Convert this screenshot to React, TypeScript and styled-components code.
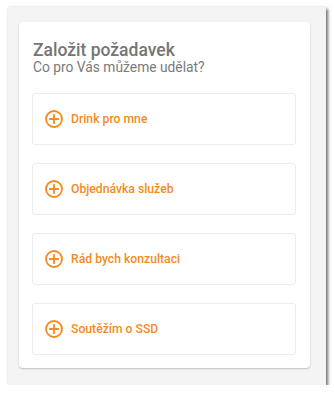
import React from "react";
import styled, { createGlobalStyle } from "styled-components";

const Global = createGlobalStyle`
  html, body { margin: 0; padding: 0; background: #ffffff; }
  body { font-family: Roboto, "Noto Sans", Arial, sans-serif; }
`;

const Frame = styled.div`
  margin: 7px 0 0 8px;
  width: 318px;
  height: 378px;
  box-sizing: border-box;
  background: #f4f4f4;
  padding: 15px 16px 0 11px;
  box-shadow: 2px 2px 3px rgba(0, 0, 0, 0.55), 0 0 2px rgba(0, 0, 0, 0.12);
`;

const Card = styled.div`
  background: #ffffff;
  border-radius: 4px;
  box-shadow: 0 1px 2px rgba(0, 0, 0, 0.22);
  padding: 18px 14px 13px 13px;
  display: flex;
  flex-direction: column;
`;

const Title = styled.h1`
  margin: 0 0 0 1px;
  font-size: 17.5px;
  line-height: 20px;
  font-weight: 500;
  color: #757575;
`;

const Subtitle = styled.p`
  margin: 1px 0 20px 1px;
  font-size: 13.8px;
  line-height: 12px;
  font-weight: 400;
  color: #7a7a7a;
`;

const List = styled.div`
  display: flex;
  flex-direction: column;
  gap: 18px;
`;

const Item = styled.button`
  display: flex;
  align-items: center;
  gap: 8px;
  height: 52px;
  padding: 0 0 0 12px;
  box-sizing: border-box;
  background: #ffffff;
  border: 1px solid #ececec;
  border-radius: 3px;
  font-family: inherit;
  font-size: 12.2px;
  font-weight: 500;
  color: #f58a1f;
  cursor: pointer;
  text-align: left;
`;

const PlusIcon = () => (
  <svg width="18" height="18" viewBox="0 0 18 18" fill="none" stroke="#f58a1f" strokeWidth="1.8" strokeLinecap="round">
    <circle cx="9" cy="9" r="8" />
    <line x1="9" y1="4.8" x2="9" y2="13.2" />
    <line x1="4.8" y1="9" x2="13.2" y2="9" />
  </svg>
);

const items = ["Drink pro mne", "Objednávka služeb", "Rád bych konzultaci", "Soutěžím o SSD"];

export default function App() {
  return (
    <>
      <Global />
      <Frame>
        <Card>
          <Title>Založit požadavek</Title>
          <Subtitle>Co pro Vás můžeme udělat?</Subtitle>
          <List>
            {items.map((t) => (
              <Item key={t}>
                <PlusIcon />
                <span>{t}</span>
              </Item>
            ))}
          </List>
        </Card>
      </Frame>
    </>
  );
}
